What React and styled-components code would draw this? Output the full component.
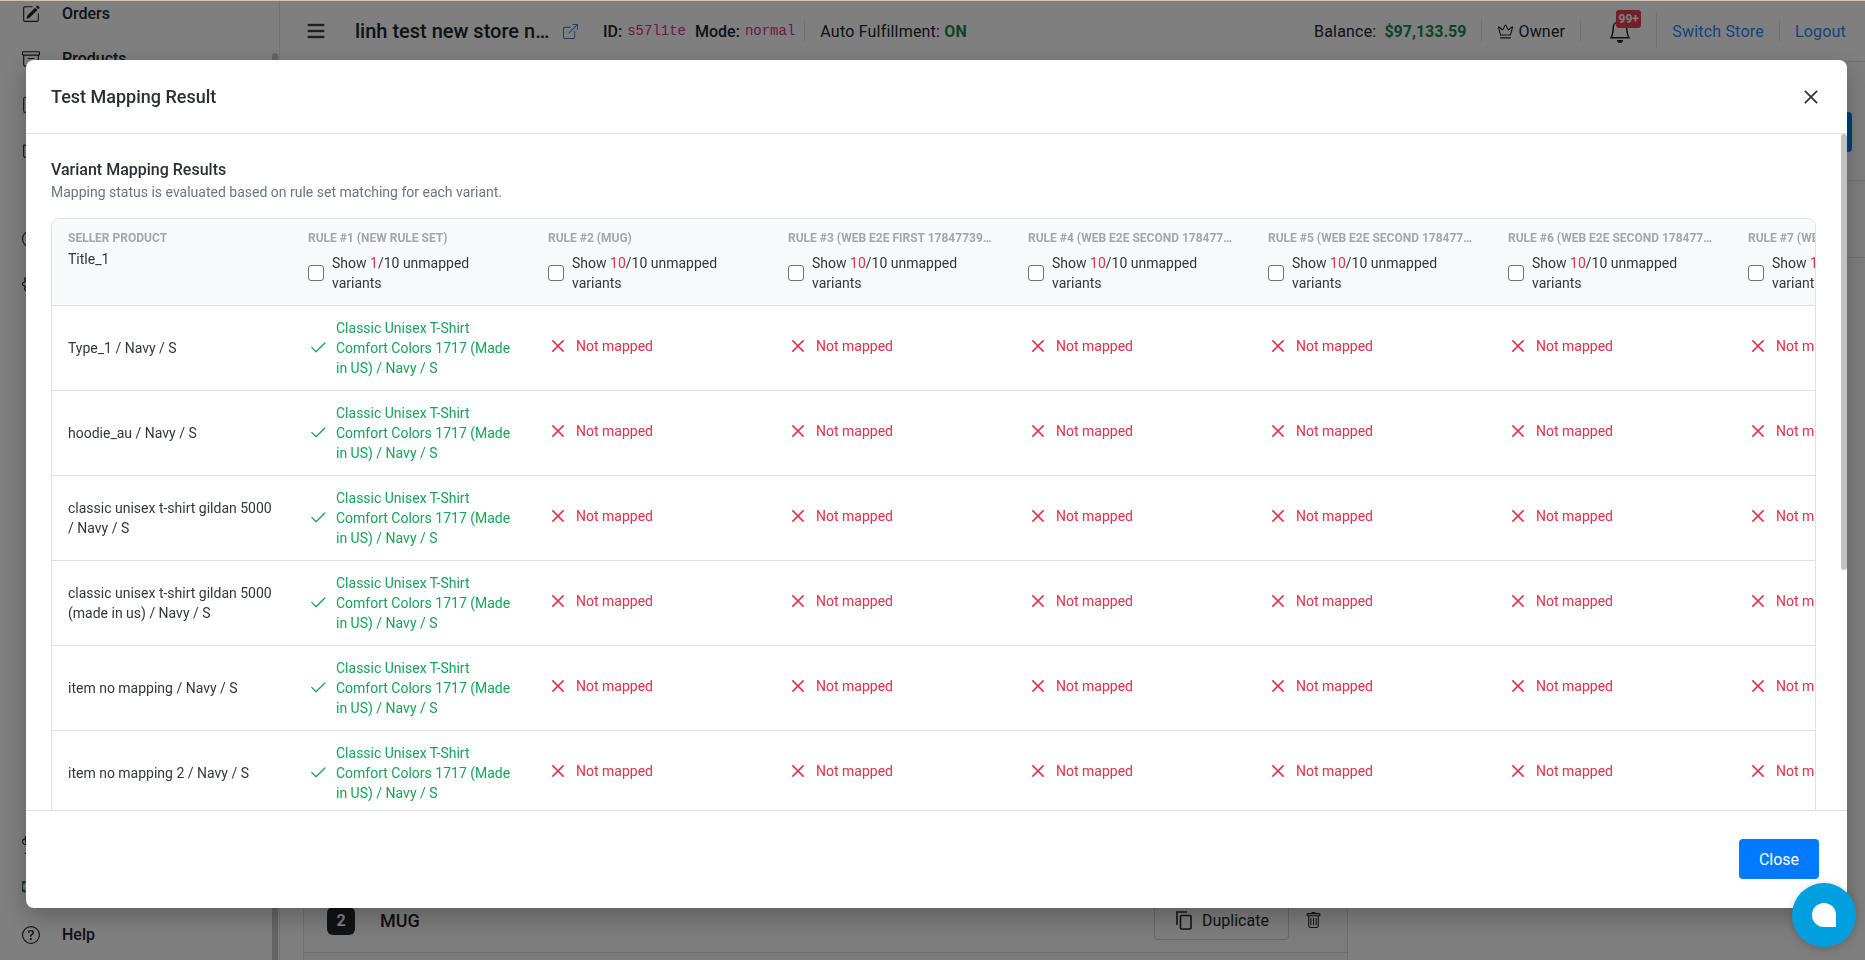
import React from "react"
import styled, { createGlobalStyle } from "styled-components"
import {
  BsPencilSquare,
  BsArchive,
  BsClipboard,
  BsBag,
  BsGear,
  BsCircle,
  BsTrophy,
  BsCashCoin,
  BsQuestionCircle,
  BsList,
  BsBoxArrowUpRight,
  BsBell,
  BsTrash,
  BsCheck2,
} from "react-icons/bs"
import { LuCrown } from "react-icons/lu"

const RULES = [
  { title: "Rule #1 (New rule set)", count: 1 },
  { title: "Rule #2 (Mug)", count: 10 },
  { title: "Rule #3 (Web E2E First 1784773912345)", count: 10 },
  { title: "Rule #4 (Web E2E Second 1784773912345)", count: 10 },
  { title: "Rule #5 (Web E2E Second 1784773912346)", count: 10 },
  { title: "Rule #6 (Web E2E Second 1784773912347)", count: 10 },
  { title: "Rule #7 (Web E2E Second 1784773912348)", count: 10 },
]

const VARIANTS = [
  "Type_1 / Navy / S",
  "hoodie_au / Navy / S",
  "classic unisex t-shirt gildan 5000 / Navy / S",
  "classic unisex t-shirt gildan 5000 (made in us) / Navy / S",
  "item no mapping / Navy / S",
  "item no mapping 2 / Navy / S",
  "item no mapping 3 / Navy / S",
  "item no mapping 4 / Navy / S",
  "item no mapping 5 / Navy / S",
  "item no mapping 6 / Navy / S",
]

const MAPPED = "Classic Unisex T-Shirt Comfort Colors 1717 (Made in US) / Navy / S"

const Cross = ({ size = 20, stroke = 1.5 }) => (
  <svg width={size} height={size} viewBox="0 0 20 20" fill="none" stroke="currentColor" strokeWidth={stroke}>
    <path d="M4.4 4.4l11.2 11.2M15.6 4.4L4.4 15.6" />
  </svg>
)

const CopyIcon = () => (
  <svg width="16" height="19" viewBox="0 0 16 19" fill="none" stroke="currentColor" strokeWidth="1.6">
    <path d="M1 14V1h10" />
    <rect x="4.5" y="4.5" width="10.5" height="13.5" rx="1" />
  </svg>
)

export default function App() {
  return (
    <>
      <GlobalStyle />
      <Page>
        <Sidebar>
          <NavList>
            <NavItem><BsPencilSquare size={18} /><span>Orders</span></NavItem>
            <NavItem><BsArchive size={18} /><span>Products</span></NavItem>
            <NavItem><BsClipboard size={18} /></NavItem>
            <NavItem><BsBag size={18} /></NavItem>
            <NavItem />
            <NavItem><BsCircle size={18} /></NavItem>
            <NavItem><BsGear size={18} /></NavItem>
          </NavList>
          <NavFooter>
            <NavItem><BsTrophy size={18} /></NavItem>
            <NavItem $green><BsCashCoin size={18} /></NavItem>
            <NavItem><BsQuestionCircle size={18} /><span>Help</span></NavItem>
          </NavFooter>
          <SideThumb />
        </Sidebar>
        <Main>
          <Topbar>
            <Burger><BsList size={24} /></Burger>
            <StoreName>linh test new store name</StoreName>
            <StoreLink><BsBoxArrowUpRight size={15} /></StoreLink>
            <Meta $left={25}>ID:</Meta>
            <Code>s57l1te</Code>
            <Meta $left={9}>Mode:</Meta>
            <Code>normal</Code>
            <Divider $before={9} />
            <Plain>Auto Fulfillment: <OnLabel>ON</OnLabel></Plain>
            <Spacer />
            <Plain>Balance:</Plain>
            <Amount>$97,133.59</Amount>
            <Divider />
            <LuCrown size={17} strokeWidth={1.5} />
            <Owner>Owner</Owner>
            <Divider />
            <Bell>
              <BsBell size={24} />
              <Badge>99+</Badge>
            </Bell>
            <Divider $tall />
            <TopLink>Switch Store</TopLink>
            <Divider />
            <TopLink>Logout</TopLink>
          </Topbar>
          <Content>
            <RuleCard>
              <RuleRow>
                <RuleBadge>2</RuleBadge>
                <RuleName>MUG</RuleName>
                <DuplicateButton><CopyIcon />Duplicate</DuplicateButton>
                <TrashButton><BsTrash size={17} /></TrashButton>
              </RuleRow>
            </RuleCard>
            <SidePanel>
              <SaveButton />
              <PanelLine $top={28} />
              <PanelLine $top={76} />
            </SidePanel>
          </Content>
        </Main>
      </Page>
      <Overlay />
      <Modal>
        <ModalHeader>
          <ModalTitle>Test Mapping Result</ModalTitle>
          <CloseIcon><Cross size={22} stroke={1.6} /></CloseIcon>
        </ModalHeader>
        <ModalBody>
          <SectionTitle>Variant Mapping Results</SectionTitle>
          <SectionHint>Mapping status is evaluated based on rule set matching for each variant.</SectionHint>
          <TableWrap>
            <Table>
              <thead>
                <tr>
                  <HeadCell>
                    <HeadTitle>Seller product</HeadTitle>
                    <OptionName>Title_1</OptionName>
                  </HeadCell>
                  {RULES.map(rule => (
                    <HeadCell key={rule.title}>
                      <HeadTitle>{rule.title}</HeadTitle>
                      <ShowToggle>
                        <Checkbox type="checkbox" readOnly />
                        <span>Show <Count>{rule.count}</Count>/10 unmapped variants</span>
                      </ShowToggle>
                    </HeadCell>
                  ))}
                </tr>
              </thead>
              <tbody>
                {VARIANTS.map(variant => (
                  <tr key={variant}>
                    <Cell>{variant}</Cell>
                    {RULES.map((rule, i) => (
                      <Cell key={rule.title}>
                        {i === 0 ? (
                          <Mapped><BsCheck2 size={20} /><span>{MAPPED}</span></Mapped>
                        ) : (
                          <NotMapped><Cross /><span>Not mapped</span></NotMapped>
                        )}
                      </Cell>
                    ))}
                  </tr>
                ))}
              </tbody>
            </Table>
          </TableWrap>
        </ModalBody>
        <BodyThumb />
        <ModalFooter>
          <CloseButton>Close</CloseButton>
        </ModalFooter>
      </Modal>
      <ChatBubble><ChatGlyph /></ChatBubble>
    </>
  )
}

const GlobalStyle = createGlobalStyle`
  * {
    box-sizing: border-box;
  }
  html, body {
    margin: 0;
    height: 100%;
    overflow: hidden;
  }
  body {
    font-family: Roboto, "Liberation Sans", sans-serif;
    font-size: 16px;
    color: #212529;
    background: #fbfcfb;
  }
`

const Page = styled.div`
  display: flex;
  height: 960px;
  border-top: 1px solid #cfc9ac;
`

const Sidebar = styled.aside`
  position: relative;
  flex: 0 0 280px;
  display: flex;
  flex-direction: column;
  background: #fff;
  border-right: 1px solid #e4e4e4;
  overflow: hidden;
`

const NavList = styled.div`
  margin-top: -10px;
`

const NavFooter = styled.div`
  margin-top: auto;
  padding-bottom: 3px;
`

const NavItem = styled.div`
  height: 45px;
  display: flex;
  align-items: center;
  gap: 22px;
  padding-left: 22px;
  font-weight: 500;
  color: ${props => (props.$green ? "#198754" : "#212529")};
`

const SideThumb = styled.div`
  position: absolute;
  top: 52px;
  right: 1px;
  bottom: 0;
  width: 6px;
  border-radius: 3px 3px 0 0;
  background: #c8c8c8;
`

const Main = styled.main`
  flex: 1;
  min-width: 0;
  display: flex;
  flex-direction: column;
`

const Topbar = styled.header`
  height: 61px;
  display: flex;
  align-items: center;
  padding: 0 19px 0 24px;
  background: #fff;
  border-bottom: 1px solid #dee2e6;
  letter-spacing: 0.2px;
`

const Burger = styled.span`
  display: flex;
  margin-right: 27px;

  svg {
    stroke: currentColor;
    stroke-width: 0.4;
  }
`

const StoreName = styled.div`
  width: 198px;
  font-size: 20px;
  font-weight: 500;
  letter-spacing: 0;
  white-space: nowrap;
  overflow: hidden;
  text-overflow: ellipsis;
`

const StoreLink = styled.span`
  display: flex;
  margin-left: 10px;
  color: #2f7fd6;
`

const Meta = styled.span`
  margin-left: ${props => props.$left}px;
  font-weight: 500;
  letter-spacing: 0;
`

const Code = styled.code`
  margin-left: 5px;
  font-family: "Liberation Mono", monospace;
  font-size: 14px;
  letter-spacing: 0;
  color: #d63384;
`

const Divider = styled.span`
  width: 1px;
  height: ${props => (props.$tall ? "36px" : "24px")};
  margin: 0 15px 0 ${props => props.$before || 15}px;
  background: #e4e4e4;
`

const Plain = styled.span`
  white-space: nowrap;
`

const OnLabel = styled.b`
  font-weight: 700;
  color: #198754;
`

const Spacer = styled.span`
  flex: 1;
`

const Amount = styled.b`
  margin-left: 8px;
  font-weight: 700;
  letter-spacing: 0;
  color: #198754;
`

const Owner = styled.span`
  margin-left: 4px;
`

const Bell = styled.span`
  position: relative;
  display: flex;
  margin: 0 9px 0 12px;
`

const Badge = styled.span`
  position: absolute;
  top: -9px;
  left: 8px;
  width: 25px;
  height: 18px;
  display: flex;
  align-items: center;
  justify-content: center;
  border-radius: 3px;
  background: #ec3a50;
  color: #fff;
  font-size: 12px;
  font-weight: 700;
  letter-spacing: 0;
`

const TopLink = styled.a`
  color: #1e88ff;
  white-space: nowrap;
`

const Content = styled.div`
  flex: 1;
  display: flex;
  padding-left: 23px;
  overflow: hidden;
`

const RuleCard = styled.section`
  flex: 0 0 1045px;
  background: #f8f8f8;
  border: solid #dedede;
  border-width: 0 1px;
`

const RuleRow = styled.div`
  display: flex;
  align-items: center;
  height: 64px;
  margin-top: 827px;
  padding-left: 23px;
  border-bottom: 1px solid #dedede;
`

const RuleBadge = styled.span`
  width: 28px;
  height: 28px;
  display: flex;
  align-items: center;
  justify-content: center;
  border-radius: 6px;
  background: #212529;
  color: #fff;
  font-weight: 700;
`

const RuleName = styled.span`
  flex: 1;
  margin-left: 25px;
  font-size: 18px;
  font-weight: 500;
`

const DuplicateButton = styled.span`
  width: 135px;
  height: 38px;
  display: flex;
  align-items: center;
  gap: 10px;
  padding-left: 21px;
  border: 1px solid #cfcfcf;
  border-radius: 4px;
`

const TrashButton = styled.span`
  display: flex;
  margin: 0 25px 0 16px;
`

const SidePanel = styled.aside`
  position: relative;
  flex: 1;
`

const SaveButton = styled.div`
  position: absolute;
  top: 50px;
  right: 13px;
  width: 120px;
  height: 40px;
  border-radius: 4px;
  background: #007bff;
`

const PanelLine = styled.div`
  margin-top: ${props => props.$top}px;
  height: 1px;
  background: #e4e4e4;
  transform: translateY(90px);
`

const Overlay = styled.div`
  position: fixed;
  inset: 1px 0 0;
  background: rgba(0, 0, 0, 0.5);
`

const Modal = styled.div`
  position: fixed;
  top: 60px;
  left: 26px;
  width: 1821px;
  height: 848px;
  display: flex;
  flex-direction: column;
  background: #fff;
  border-radius: 8px;
  box-shadow: 0 8px 24px rgba(0, 0, 0, 0.25);
  overflow: hidden;
`

const ModalHeader = styled.div`
  flex: 0 0 74px;
  display: flex;
  align-items: center;
  justify-content: space-between;
  padding: 0 25px 0 25px;
  border-bottom: 1px solid #dee2e6;
`

const ModalTitle = styled.h5`
  margin: 0;
  font-size: 18px;
  font-weight: 500;
  color: #2b2f33;
`

const CloseIcon = styled.span`
  display: flex;
  color: #333;
`

const ModalBody = styled.div`
  flex: 1;
  min-height: 0;
  overflow: hidden;
  padding: 24px 31px 24px 25px;
`

const BodyThumb = styled.div`
  position: absolute;
  top: 74px;
  right: 0;
  width: 6px;
  height: 436px;
  border-radius: 3px;
  background: #c1c1c1;
`

const SectionTitle = styled.div`
  font-size: 16px;
  font-weight: 500;
  line-height: 24px;
  color: #2b2f33;
`

const SectionHint = styled.div`
  font-size: 14px;
  line-height: 20px;
  color: #6c757d;
`

const TableWrap = styled.div`
  margin-top: 16px;
  border: 1px solid #dee2e6;
  border-radius: 8px;
  overflow-x: hidden;
`

const Table = styled.table`
  border-collapse: collapse;
  table-layout: fixed;
  width: 1920px;
  font-size: 14px;
  line-height: 20px;
  color: #33373b;
`

const HeadCell = styled.th`
  width: 240px;
  padding: 10px 16px 12px;
  background: #f8f9fa;
  border-bottom: 1px solid #dee2e6;
  font-weight: 400;
  text-align: left;
  vertical-align: top;
`

const HeadTitle = styled.div`
  font-size: 12px;
  font-weight: 700;
  line-height: 18px;
  color: #a3a7ad;
  text-transform: uppercase;
  white-space: nowrap;
  overflow: hidden;
  text-overflow: ellipsis;
`

const OptionName = styled.div`
  margin-top: 2px;
`

const ShowToggle = styled.label`
  display: flex;
  align-items: center;
  gap: 8px;
  margin-top: 6px;
`

const Checkbox = styled.input`
  flex: 0 0 16px;
  appearance: none;
  width: 16px;
  height: 16px;
  margin: 0;
  border: 1px solid #6c757d;
  border-radius: 3px;
  background: #fff;
`

const Count = styled.span`
  color: #dc3545;
`

const Cell = styled.td`
  height: 85px;
  padding: 12px 16px;
  border-bottom: 1px solid #dee2e6;
  vertical-align: middle;
`

const Mapped = styled.div`
  display: flex;
  align-items: center;
  gap: 8px;
  color: #16a35a;

  svg {
    flex: 0 0 20px;
  }
`

const NotMapped = styled.div`
  display: flex;
  align-items: center;
  gap: 8px;
  padding-bottom: 5px;
  color: #e02f4b;

  svg {
    flex: 0 0 20px;
  }
`

const ModalFooter = styled.div`
  flex: 0 0 98px;
  display: flex;
  justify-content: flex-end;
  align-items: flex-start;
  padding: 28px 28px 0 0;
  border-top: 1px solid #dee2e6;
`

const CloseButton = styled.button`
  width: 80px;
  height: 40px;
  border: 0;
  border-radius: 4px;
  background: #007bff;
  color: #fff;
  font: 400 16px Roboto, sans-serif;
`

const ChatBubble = styled.div`
  position: fixed;
  right: 9px;
  bottom: 13px;
  width: 64px;
  height: 64px;
  display: flex;
  align-items: center;
  justify-content: center;
  border-radius: 50%;
  background: #00a0e0;
  box-shadow: 0 2px 10px rgba(0, 0, 0, 0.2);
`

const ChatGlyph = styled.span`
  width: 24px;
  height: 24px;
  border-radius: 12px 12px 0 12px;
  background: #fff;
`
